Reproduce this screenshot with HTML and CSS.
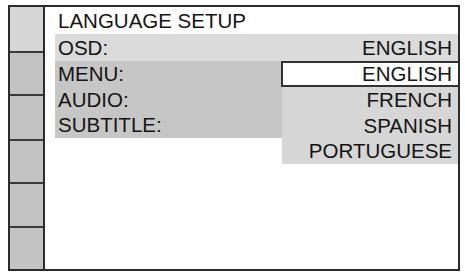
FILE: index.html
```html
<!DOCTYPE html>
<html>
<head>
<meta charset="utf-8">
<link rel="stylesheet" href="styles.css">
</head>
<body>
<div class="screen">
  <div class="side">
    <div class="cell cell-top"></div>
    <div class="cell"></div>
    <div class="cell"></div>
    <div class="cell"></div>
    <div class="cell"></div>
    <div class="cell cell-last"></div>
  </div>
  <div class="main">
    <div class="title">LANGUAGE SETUP</div>
    <div class="row osd"><span>OSD:</span><span>ENGLISH</span></div>
    <div class="lower">
      <div class="labels">
        <div class="label">MENU:</div>
        <div class="label">AUDIO:</div>
        <div class="label">SUBTITLE:</div>
      </div>
      <div class="dropdown">
        <div class="opt selected">ENGLISH</div>
        <div class="opt">FRENCH</div>
        <div class="opt">SPANISH</div>
        <div class="opt">PORTUGUESE</div>
      </div>
    </div>
  </div>
</div>
</body>
</html>
```

FILE: styles.css
```css
html, body {
  margin: 0;
  padding: 0;
  background: #ffffff;
}
body {
  font-family: "Liberation Sans", Arial, sans-serif;
  font-size: 20.5px;
  color: #141414;
  padding: 5px 0 0 8px;
}
.screen {
  width: 448px;
  height: 262px;
  border: 2px solid #2b2b2b;
  display: flex;
  background: #ffffff;
}
.side {
  width: 33px;
  border-right: 2px solid #2b2b2b;
  display: grid;
  grid-template-rows: 46px 43px 45px 43px 44px 1fr;
}
.cell {
  background: #c3c3c3;
  border-bottom: 2px solid #3a3a3a;
}
.cell-top {
  background: #d6d6d6;
}
.cell-last {
  border-bottom: none;
}
.main {
  flex: 1;
  padding-left: 10px;
  display: flex;
  flex-direction: column;
}
.title {
  height: 27px;
  line-height: 27px;
  padding-left: 3px;
}
.row {
  display: flex;
  justify-content: space-between;
  align-items: center;
  height: 27px;
  padding: 0 6px 0 3px;
}
.osd {
  background: #dbdbdb;
}
.lower {
  display: flex;
  align-items: flex-start;
}
.labels {
  width: 224px;
  padding-left: 3px;
  background: #c6c6c6;
  height: 77px;
  display: flex;
  flex-direction: column;
}
.label {
  height: 25.67px;
  line-height: 25.67px;
}
.dropdown {
  flex: 1;
  background: #d6d6d6;
  display: flex;
  flex-direction: column;
}
.opt {
  height: 25.5px;
  line-height: 25.5px;
  text-align: right;
  padding-right: 6px;
}
.opt.selected {
  background: #ffffff;
  border: 2px solid #333333;
  border-right: none;
  height: 22px;
  line-height: 22px;
  margin-left: -1px;
}
```
